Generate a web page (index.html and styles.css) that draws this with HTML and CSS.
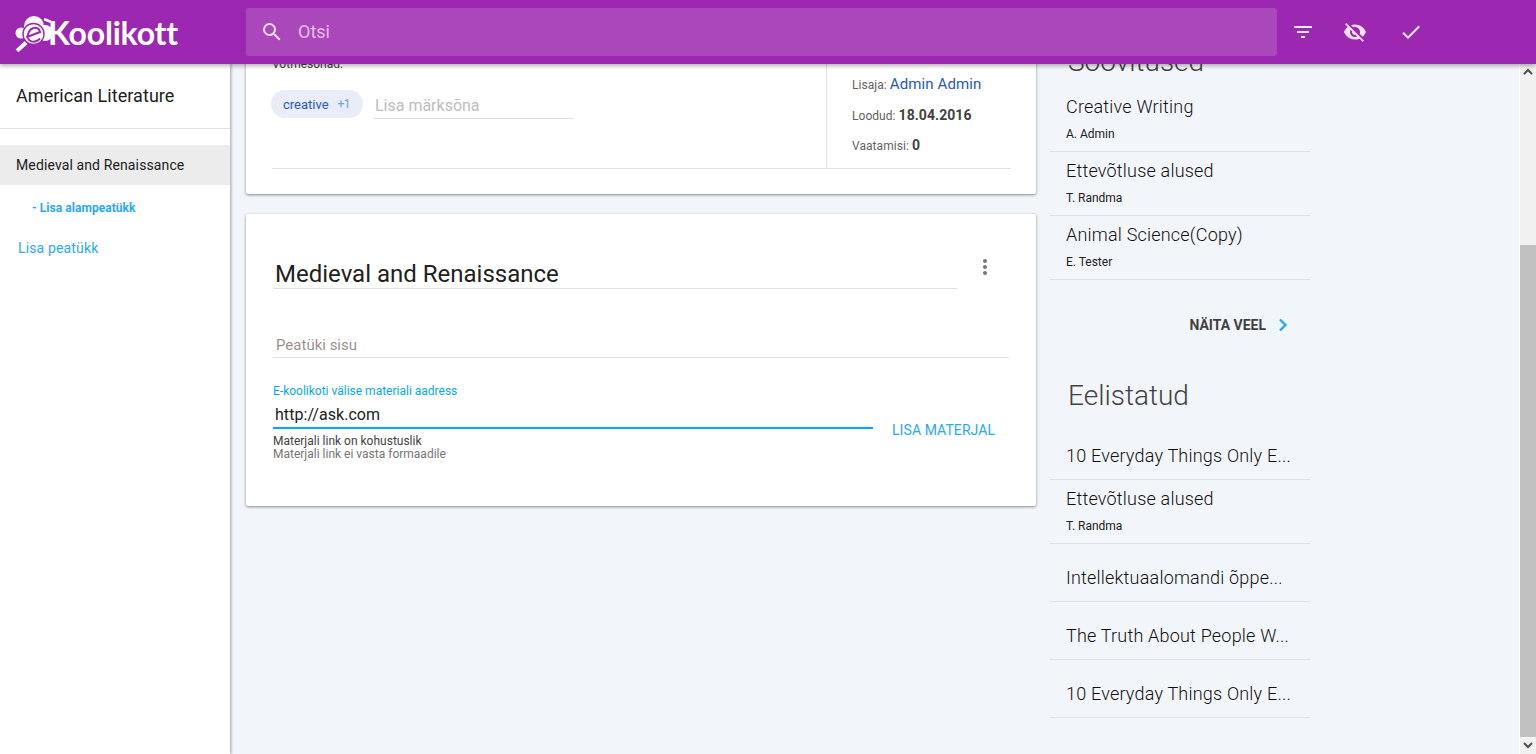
FILE: index.html
```html
<!DOCTYPE html>
<html>
    <head>
        <meta charset="utf-8">
        <title>e-Koolikott</title>
        <link rel="stylesheet" href="styles.css">
    </head>

    <body>
        <div class="topbar">
            <div class="logo">
                <svg class="logo-mark" width="44" height="42" viewBox="0 0 44 42">
                    <circle fill="#fff" cx="7" cy="21" r="5.500"/>
                    <circle fill="#fff" cx="20" cy="14" r="10"/>
                    <circle fill="#fff" cx="31" cy="21" r="8"/>
                    <circle fill="#fff" stroke="#9c27b0" stroke-width="1.400" cx="19.500" cy="22" r="10.500"/>
                    <path fill="none" stroke="#9c27b0" stroke-width="2" stroke-linecap="round" d="M13 25l13-5c-.5-3.500-3.500-5-6.500-4-4 1.200-6.500 6-5.500 10 1 3.500 5 4.500 8.500 3 1.200-.5 2.200-1.200 3-2"/>
                    <path fill="none" stroke="#fff" stroke-width="4" stroke-linecap="square" d="M10.500 32l-6 5.500"/>
                    <path fill="none" stroke="#fff" stroke-width="2.500" stroke-linecap="round" d="M31 7.500l5 2"/>
                </svg>
                <span class="logo-text">Koolikott</span>
            </div>
            <div class="search">
                <svg width="24" height="24" viewBox="0 0 24 24"><path fill="#f3def7" d="M15.500 14h-.79l-.28-.27A6.470 6.470 0 0 0 16 9.500 6.500 6.500 0 1 0 9.500 16c1.610 0 3.090-.59 4.230-1.570l.27.28v.79l5 4.990L20.490 19l-4.990-5zm-6 0C7.010 14 5 11.990 5 9.500S7.010 5 9.500 5 14 7.010 14 9.500 11.990 14 9.500 14z"/></svg>
                <span class="search-text">Otsi</span>
            </div>
            <div class="top-icons">
                <svg width="24" height="24" viewBox="0 0 24 24"><path fill="#f8ecfa" d="M10 18h4v-2h-4v2zM3 6v2h18V6H3zm3 7h12v-2H6v2z"/></svg>
                <svg width="24" height="24" viewBox="0 0 24 24"><path fill="#f3e3f7" d="M12 7c2.760 0 5 2.240 5 5 0 .65-.13 1.260-.36 1.830l2.920 2.920c1.510-1.260 2.700-2.890 3.430-4.750-1.730-4.390-6-7.500-11-7.500-1.400 0-2.740.25-3.980.7l2.160 2.160C10.740 7.130 11.350 7 12 7zM2 4.270l2.280 2.280.46.46C3.080 8.300 1.780 10.020 1 12c1.730 4.390 6 7.500 11 7.500 1.550 0 3.030-.3 4.380-.84l.42.42L19.730 22 21 20.730 3.270 3 2 4.270zM7.530 9.800l1.550 1.550c-.05.21-.08.43-.08.650 0 1.660 1.340 3 3 3 .22 0 .44-.03.65-.08l1.550 1.550c-.67.330-1.410.53-2.200.53-2.760 0-5-2.240-5-5 0-.79.2-1.530.53-2.200z"/></svg>
                <svg class="check-icon" width="24" height="24" viewBox="0 0 24 24"><path fill="#f8ecfa" d="M9 16.170L4.830 12l-1.420 1.410L9 19 21 7l-1.410-1.410z"/></svg>
            </div>
        </div>

        <div class="page">
            <div class="sidebar">
                <div class="side-title">American Literature</div>
                <div class="side-nav">
                    <div class="side-chapter">Medieval and Renaissance</div>
                    <div class="side-sub">- Lisa alampeatükk</div>
                    <div class="side-add">Lisa peatükk</div>
                </div>
            </div>

            <div class="main">
                <div class="card card-info">
                    <div class="info-row">
                        <div class="info-left">
                            <div class="keywords-label">Võtmesõnad:</div>
                            <div class="tags">
                                <div class="tag"><span>creative</span><span class="tag-count">+1</span></div>
                                <div class="tag-input">Lisa märksõna</div>
                            </div>
                        </div>
                        <div class="info-right">
                            <div class="meta meta-author">Lisaja: <a class="meta-link">Admin Admin</a></div>
                            <div class="meta meta-date">Loodud: <b>18.04.2016</b></div>
                            <div class="meta meta-views">Vaatamisi: <b>0</b></div>
                        </div>
                    </div>
                </div>

                <div class="card card-chapter">
                    <div class="chapter-head">
                        <div class="chapter-title">Medieval and Renaissance</div>
                        <svg class="dots" width="24" height="24" viewBox="0 0 24 24"><path fill="#757575" d="M12 8c1.100 0 2-.9 2-2s-.9-2-2-2-2 .9-2 2 .9 2 2 2zm0 2c-1.100 0-2 .9-2 2s.9 2 2 2 2-.9 2-2-.9-2-2-2zm0 6c-1.100 0-2 .9-2 2s.9 2 2 2 2-.9 2-2-.9-2-2-2z"/></svg>
                    </div>
                    <div class="chapter-body">Peatüki sisu</div>
                    <div class="material">
                        <div class="material-field">
                            <div class="material-label">E-koolikoti välise materiali aadress</div>
                            <div class="material-input">http://ask.com</div>
                            <div class="material-error">Materjali link on kohustuslik</div>
                            <div class="material-hint">Materjali link ei vasta formaadile</div>
                        </div>
                        <div class="material-btn">LISA MATERJAL</div>
                    </div>
                </div>
            </div>

            <div class="aside">
                <div class="aside-title aside-title-cut">Soovitused</div>
                <div class="aside-list">
                    <div class="item"><div class="item-name">Creative Writing</div><div class="item-author">A. Admin</div></div>
                    <div class="item"><div class="item-name">Ettevõtluse alused</div><div class="item-author">T. Randma</div></div>
                    <div class="item"><div class="item-name">Animal Science(Copy)</div><div class="item-author">E. Tester</div></div>
                </div>
                <div class="more">
                    <span>NÄITA VEEL</span>
                    <svg width="10" height="14" viewBox="0 0 10 14"><path fill="none" stroke="#29a9f5" stroke-width="2.400" d="M2 1.500l5.500 5.500-5.500 5.500"/></svg>
                </div>
                <div class="aside-title">Eelistatud</div>
                <div class="aside-list aside-list-fav">
                    <div class="item item-single"><div class="item-name">10 Everyday Things Only E...</div></div>
                    <div class="item"><div class="item-name">Ettevõtluse alused</div><div class="item-author">T. Randma</div></div>
                    <div class="item item-single"><div class="item-name">Intellektuaalomandi õppe...</div></div>
                    <div class="item item-single"><div class="item-name">The Truth About People W...</div></div>
                    <div class="item item-single"><div class="item-name">10 Everyday Things Only E...</div></div>
                </div>
            </div>

            <div class="scrollbar">
                <div class="scroll-btn"><svg width="16" height="16" viewBox="0 0 16 16"><path fill="none" stroke="#505050" stroke-width="2" d="M4 10l4-4 4 4"/></svg></div>
                <div class="scroll-track"><div class="scroll-thumb"></div></div>
                <div class="scroll-btn"><svg width="16" height="16" viewBox="0 0 16 16"><path fill="none" stroke="#505050" stroke-width="2" d="M4 6l4 4 4-4"/></svg></div>
            </div>
        </div>
    </body>
</html>
```

FILE: styles.css
```css
html, body {
    margin: 0;
    height: 100%;
    overflow: hidden;
}

body {
    display: flex;
    flex-direction: column;
    font-family: Roboto, "Liberation Sans", sans-serif;
    background-color: #f2f5fa;
    color: #212121;
}

/* top bar */
.topbar {
    position: relative;
    z-index: 3;
    flex: none;
    height: 64px;
    display: flex;
    align-items: center;
    background-color: #9c27b0;
    box-shadow: 0 2px 4px rgba(0, 0, 0, 0.3);
}

.logo {
    width: 246px;
    flex: none;
    display: flex;
    align-items: center;
    padding-left: 14px;
    box-sizing: border-box;
}

.logo-mark {
    flex: none;
    margin-top: 2px;
}

.logo-text {
    margin-left: -10px;
    color: white;
    font-family: Lato, sans-serif;
    font-weight: 700;
    font-size: 32px;
    letter-spacing: -0.2px;
}

.search {
    width: 1031px;
    height: 48px;
    flex: none;
    display: flex;
    align-items: center;
    padding-left: 14px;
    box-sizing: border-box;
    background-color: rgba(255, 255, 255, 0.15);
    border-radius: 2px;
}

.search-text {
    margin: -2px 0 0 14px;
    font-size: 18px;
    color: #e3bfe9;
}

.top-icons {
    display: flex;
    margin-left: 14px;
    gap: 28px;
}

.check-icon {
    margin-left: 4px;
}

/* page columns */
.page {
    flex: 1;
    display: flex;
    min-height: 0;
}

.sidebar {
    position: relative;
    z-index: 2;
    width: 230px;
    flex: none;
    background-color: white;
    box-shadow: 1px 0 3px rgba(0, 0, 0, 0.35);
}

.side-title {
    height: 64px;
    line-height: 63px;
    padding-left: 16px;
    font-size: 18px;
    letter-spacing: 0.05px;
    border-bottom: 1px solid #e0e0e0;
}

.side-nav {
    padding-top: 16px;
}

.side-chapter {
    height: 40px;
    line-height: 40px;
    padding-left: 16px;
    font-size: 14px;
    letter-spacing: 0.12px;
    background-color: #ececec;
}

.side-sub {
    margin-top: 16px;
    padding-left: 32px;
    font-size: 12px;
    line-height: 15px;
    font-weight: 700;
    letter-spacing: 0.05px;
    color: #29a9f5;
}

.side-add {
    margin-top: 24px;
    padding-left: 18px;
    font-size: 14px;
    line-height: 16px;
    letter-spacing: 0.15px;
    color: #29a9f5;
}

.main {
    width: 790px;
    flex: none;
    margin-left: 16px;
}

.card {
    background-color: white;
    border-radius: 2px;
    box-shadow: 0 1px 3px rgba(0, 0, 0, 0.45);
}

/* first card is scrolled under the top bar */
.card-info {
    height: 170px;
    margin-top: -40px;
    padding: 0 25px 0 26px;
    box-sizing: border-box;
}

.info-row {
    height: 144px;
    display: flex;
    border-bottom: 1px solid #e0e0e0;
}

.info-left {
    flex: 1;
    padding-top: 33px;
}

.keywords-label {
    font-size: 12px;
    line-height: 14px;
    color: #424242;
}

.tags {
    display: flex;
    margin: 19px 0 0 -1px;
}

.tag {
    height: 28px;
    display: flex;
    align-items: center;
    padding: 0 13px 0 12px;
    gap: 9px;
    border-radius: 14px;
    background-color: #e8edf8;
    font-size: 13px;
    color: #2a56c6;
}

.tag-count {
    font-size: 12px;
    letter-spacing: -0.6px;
    color: #6f9cf0;
}

.tag-input {
    width: 200px;
    height: 29px;
    margin-left: 10px;
    padding-left: 2px;
    box-sizing: border-box;
    line-height: 32px;
    font-size: 16px;
    color: #bdbdbd;
    border-bottom: 1px solid #e0e0e0;
}

.info-right {
    width: 185px;
    flex: none;
    border-left: 1px solid #e0e0e0;
    padding-left: 25px;
    box-sizing: border-box;
}

.meta {
    font-size: 12px;
    letter-spacing: 0.05px;
    color: #616161;
    line-height: 18px;
}

.meta b {
    font-size: 14px;
    font-weight: 700;
    color: #424242;
}

.meta-author {
    margin-top: 51px;
}

.meta-link {
    font-size: 15px;
    letter-spacing: 0.12px;
    color: #2a56c6;
}

.meta-date {
    margin-top: 12px;
}

.meta-views {
    margin-top: 11px;
}

.card-chapter {
    height: 292px;
    margin-top: 20px;
    padding: 0 27px;
    box-sizing: border-box;
}

.chapter-head {
    display: flex;
    padding-top: 41px;
}

.chapter-title {
    width: 684px;
    flex: none;
    height: 34px;
    box-sizing: border-box;
    padding-left: 2px;
    line-height: 38px;
    font-size: 24px;
    border-bottom: 1px solid #e0e0e0;
}

.dots {
    margin: 0 0 0 16px;
}

.chapter-body {
    height: 32px;
    margin-top: 36px;
    padding-left: 3px;
    line-height: 40px;
    font-size: 15px;
    color: #9e8f8f;
    border-bottom: 1px solid #e0e0e0;
}

.material {
    display: flex;
    margin-top: 26px;
}

.material-field {
    width: 600px;
    flex: none;
}

.material-label {
    font-size: 12px;
    line-height: 14px;
    color: #03a9f4;
}

.material-input {
    height: 31px;
    padding-left: 2px;
    box-sizing: border-box;
    line-height: 34px;
    font-size: 16px;
    letter-spacing: 0.05px;
    border-bottom: 2px solid #03a9f4;
}

.material-error {
    margin-top: 6px;
    font-size: 12px;
    line-height: 13px;
    color: #424242;
}

.material-hint {
    font-size: 12px;
    line-height: 13px;
    color: #757575;
}

.material-btn {
    margin: 38px 0 0 19px;
    font-size: 14px;
    line-height: 16px;
    letter-spacing: 0.08px;
    color: #29a9f5;
}

/* right column */
.aside {
    width: 260px;
    flex: none;
    margin-left: 14px;
}

.aside-title {
    height: 36px;
    padding-left: 18px;
    font-size: 28px;
    font-weight: 300;
    line-height: 36px;
    color: #424242;
}

.aside-title-cut {
    margin-top: -20px;
}

.aside-list {
    margin-top: 8px;
}

.aside-list-fav {
    margin-top: 8px;
}

.item {
    height: 64px;
    box-sizing: border-box;
    padding: 8px 16px 0;
    border-bottom: 1px solid #dde1e8;
}

.item-single {
    height: 58px;
    padding-top: 23px;
}

.item-name {
    font-size: 18px;
    font-weight: 300;
    line-height: 22px;
    letter-spacing: 0.2px;
    color: #111;
}

.item-author {
    margin-top: 9px;
    font-size: 12px;
    line-height: 14px;
}

.more {
    display: flex;
    align-items: center;
    justify-content: flex-end;
    height: 24px;
    margin: 33px 22px 41px 0;
    gap: 12px;
    font-size: 14px;
    font-weight: 700;
    color: #424242;
}

/* scrollbar drawn by hand, the page itself doesn't scroll */
.scrollbar {
    width: 16px;
    flex: none;
    margin-left: auto;
    display: flex;
    flex-direction: column;
    background-color: #f1f1f1;
    border-left: 1px solid #fff;
    box-sizing: content-box;
}

.scroll-btn {
    height: 17px;
    flex: none;
}

.scroll-track {
    flex: 1;
    display: flex;
    flex-direction: column;
    justify-content: flex-end;
}

.scroll-thumb {
    height: 492px;
    background-color: #c1c1c1;
}
```
